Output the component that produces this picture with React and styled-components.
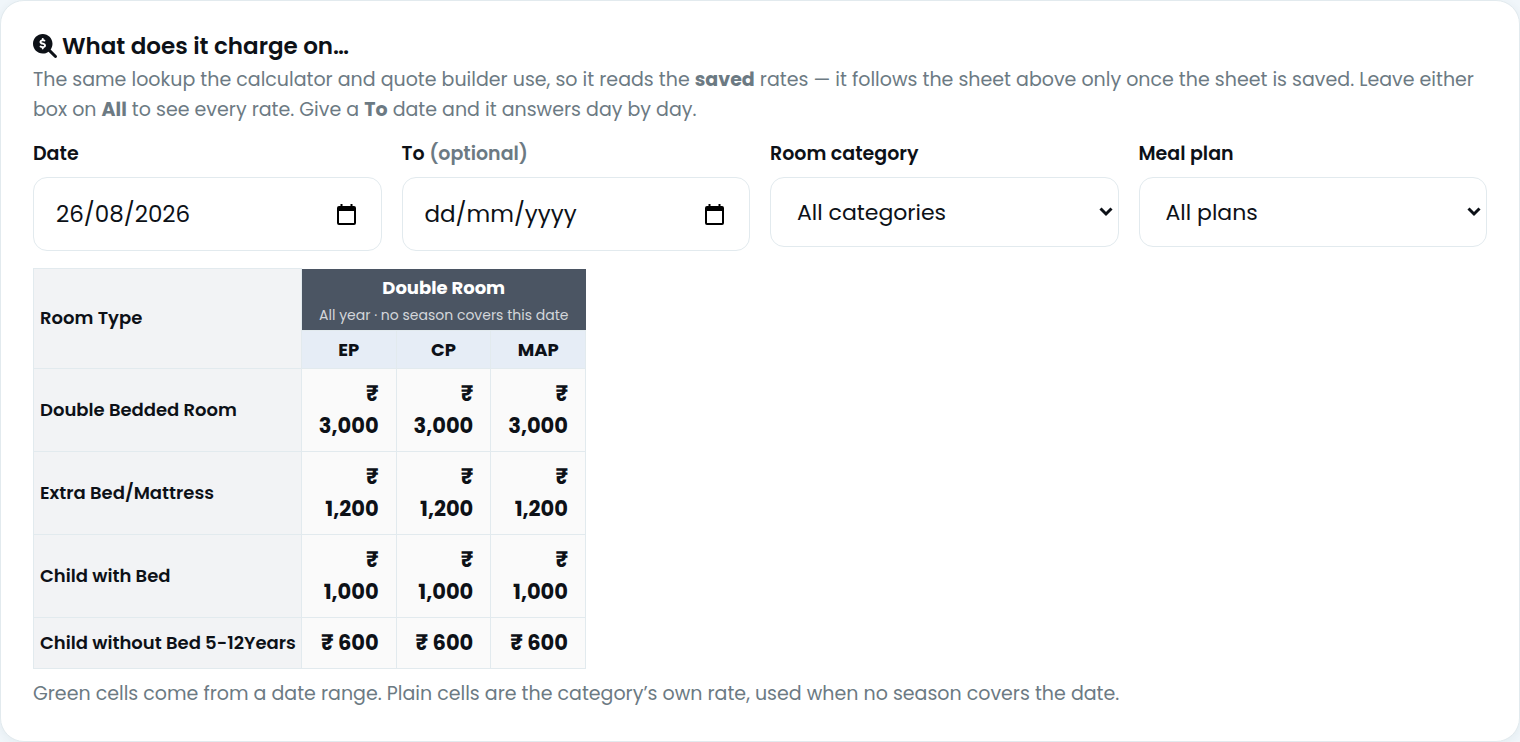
import { useState } from "react";
import styled, { createGlobalStyle } from "styled-components";
import { FaMagnifyingGlassDollar } from "react-icons/fa6";

const plans = ["EP", "CP", "MAP"];

const rates = [
  { room: "Double Bedded Room", prices: ["3,000", "3,000", "3,000"] },
  { room: "Extra Bed/Mattress", prices: ["1,200", "1,200", "1,200"] },
  { room: "Child with Bed", prices: ["1,000", "1,000", "1,000"] },
  { room: "Child without Bed 5-12Years", prices: ["600", "600", "600"] },
];

const CalendarIcon = () => (
  <svg width="19" height="21" viewBox="0 0 19 21" aria-hidden="true">
    <path
      fill="#000"
      fillRule="evenodd"
      d="M3.500 0h2v2h8V0h2v2h1.500A2 2 0 0 1 19 4v15a2 2 0 0 1-2 2H2a2 2 0 0 1-2-2V4a2 2 0 0 1 2-2h1.500zM2 7v12h15V7z"
    />
  </svg>
);

const ChevronIcon = () => (
  <svg width="14" height="10" viewBox="0 0 14 10" aria-hidden="true">
    <path d="M1.500 1.500 7 7l5.500-5.500" fill="none" stroke="#0d1117" strokeWidth="3" />
  </svg>
);

const DateField = ({ id, label, hint, initial }) => {
  const [value, setValue] = useState(initial);
  return (
    <Field>
      <Label htmlFor={id}>
        {label} {hint && <Hint>{hint}</Hint>}
      </Label>
      <ControlBox>
        <DateInput
          id={id}
          type="text"
          placeholder="dd/mm/yyyy"
          value={value}
          onChange={(e) => setValue(e.target.value)}
        />
        <CalendarButton type="button" aria-label={`Pick ${label} date`}>
          <CalendarIcon />
        </CalendarButton>
      </ControlBox>
    </Field>
  );
};

const SelectField = ({ id, label, options }) => (
  <Field>
    <Label htmlFor={id}>{label}</Label>
    <ControlBox>
      <Select id={id}>
        {options.map((option) => (
          <option key={option}>{option}</option>
        ))}
      </Select>
      <SelectArrow>
        <ChevronIcon />
      </SelectArrow>
    </ControlBox>
  </Field>
);

export default function App() {
  return (
    <>
      <GlobalStyle />
      <Card>
        <Title>
          <FaMagnifyingGlassDollar size={24} />
          What does it charge on…
        </Title>
        <Description>
          The same lookup the calculator and quote builder use, so it reads the <b>saved</b> rates — it
          follows the sheet above only once the sheet is saved. Leave either box on <b>All</b> to see every
          rate. Give a <b>To</b> date and it answers day by day.
        </Description>
        <Filters>
          <DateField id="date-from" label="Date" initial="26/08/2026" />
          <DateField id="date-to" label="To" hint="(optional)" initial="" />
          <SelectField
            id="category"
            label="Room category"
            options={["All categories", "Double Room"]}
          />
          <SelectField id="plan" label="Meal plan" options={["All plans", ...plans]} />
        </Filters>
        <RateTable>
          <colgroup>
            <RoomCol />
            <PlanCol span={3} />
          </colgroup>
          <thead>
            <tr>
              <RoomHead rowSpan={2}>Room Type</RoomHead>
              <CategoryHead colSpan={3}>
                Double Room
                <Season>All year · no season covers this date</Season>
              </CategoryHead>
            </tr>
            <tr>
              {plans.map((plan) => (
                <PlanHead key={plan}>{plan}</PlanHead>
              ))}
            </tr>
          </thead>
          <tbody>
            {rates.map(({ room, prices }) => (
              <tr key={room}>
                <RoomHead scope="row">{room}</RoomHead>
                {prices.map((price, i) => (
                  <PriceCell key={plans[i]}>₹ {price}</PriceCell>
                ))}
              </tr>
            ))}
          </tbody>
        </RateTable>
        <Note>
          Green cells come from a date range. Plain cells are the category’s own rate, used when no season
          covers the date.
        </Note>
      </Card>
    </>
  );
}

const GlobalStyle = createGlobalStyle`
  * {
    box-sizing: border-box;
  }
  body {
    margin: 0;
    background: #f0f6fa;
    color: #0d1117;
    font-family: Poppins, Inter, sans-serif;
    font-size: 19px;
  }
  button, input, select {
    font: inherit;
    color: inherit;
  }
`;

const Card = styled.section`
  padding: 32px;
  background: #fff;
  border: 1px solid #e2eaee;
  border-radius: 24px;
  box-shadow: 0 2px 8px rgba(30, 60, 80, 0.06);
`;

const Title = styled.h2`
  display: flex;
  align-items: center;
  gap: 5px;
  margin: 0 0 6px;
  font-size: 23px;
  line-height: 26px;
  font-weight: 600;
`;

const Description = styled.p`
  margin: 0 0 14px;
  line-height: 30px;
  color: #6c7a83;
`;

const Filters = styled.div`
  display: grid;
  grid-template-columns: repeat(4, 1fr);
  align-items: start;
  gap: 20px;
  margin-bottom: 17px;
`;

const Field = styled.div`
  display: flex;
  flex-direction: column;
  gap: 8px;
`;

const Label = styled.label`
  font-size: 19px;
  line-height: 30px;
  font-weight: 600;
`;

const Hint = styled.span`
  color: #6c7a83;
`;

const ControlBox = styled.div`
  position: relative;
  display: flex;
`;

const DateInput = styled.input`
  width: 100%;
  height: 74px;
  padding: 0 64px 0 22px;
  font-size: 23px;
  background: #fff;
  border: 1px solid #e2eaee;
  border-radius: 14px;
  &::placeholder {
    color: inherit;
    opacity: 1;
  }
`;

const CalendarButton = styled.button`
  position: absolute;
  right: 26px;
  top: 0;
  bottom: 0;
  display: flex;
  align-items: center;
  padding: 0;
  background: none;
  border: 0;
`;

const Select = styled.select`
  width: 100%;
  height: 70px;
  padding: 0 32px 0 26px;
  font-size: 22px;
  appearance: none;
  background: #fff;
  border: 1px solid #e2eaee;
  border-radius: 14px;
`;

const SelectArrow = styled.span`
  position: absolute;
  right: 6px;
  top: 0;
  bottom: 0;
  display: flex;
  align-items: center;
  pointer-events: none;
`;

const RateTable = styled.table`
  width: 553px;
  table-layout: fixed;
  border-collapse: collapse;
`;

const RoomCol = styled.col`
  width: 268px;
`;

const PlanCol = styled.col``;

const RoomHead = styled.th`
  padding: 9px 6px;
  font-size: 18px;
  line-height: 30px;
  font-weight: 600;
  text-align: left;
  white-space: nowrap;
  background: #f2f3f5;
  border: 1px solid #e2eaee;
`;

const CategoryHead = styled.th`
  padding: 5px 0 2px;
  font-size: 18px;
  line-height: 28px;
  font-weight: 700;
  color: #fff;
  background: #4b5563;
`;

const Season = styled.div`
  font-size: 14px;
  line-height: 26px;
  font-weight: 400;
  color: #d3d6da;
  white-space: nowrap;
`;

const PlanHead = styled.th`
  padding: 4px;
  font-size: 18px;
  line-height: 29px;
  font-weight: 700;
  background: #e6edf6;
  border: 1px solid #e2eaee;
`;

const PriceCell = styled.td`
  padding: 9px 17px 9px 12px;
  font-size: 21px;
  line-height: 32px;
  font-weight: 700;
  text-align: right;
  background: #fafafa;
  border: 1px solid #e2eaee;
`;

const Note = styled.p`
  margin: 10px 0 0;
  line-height: 30px;
  color: #6c7a83;
`;
